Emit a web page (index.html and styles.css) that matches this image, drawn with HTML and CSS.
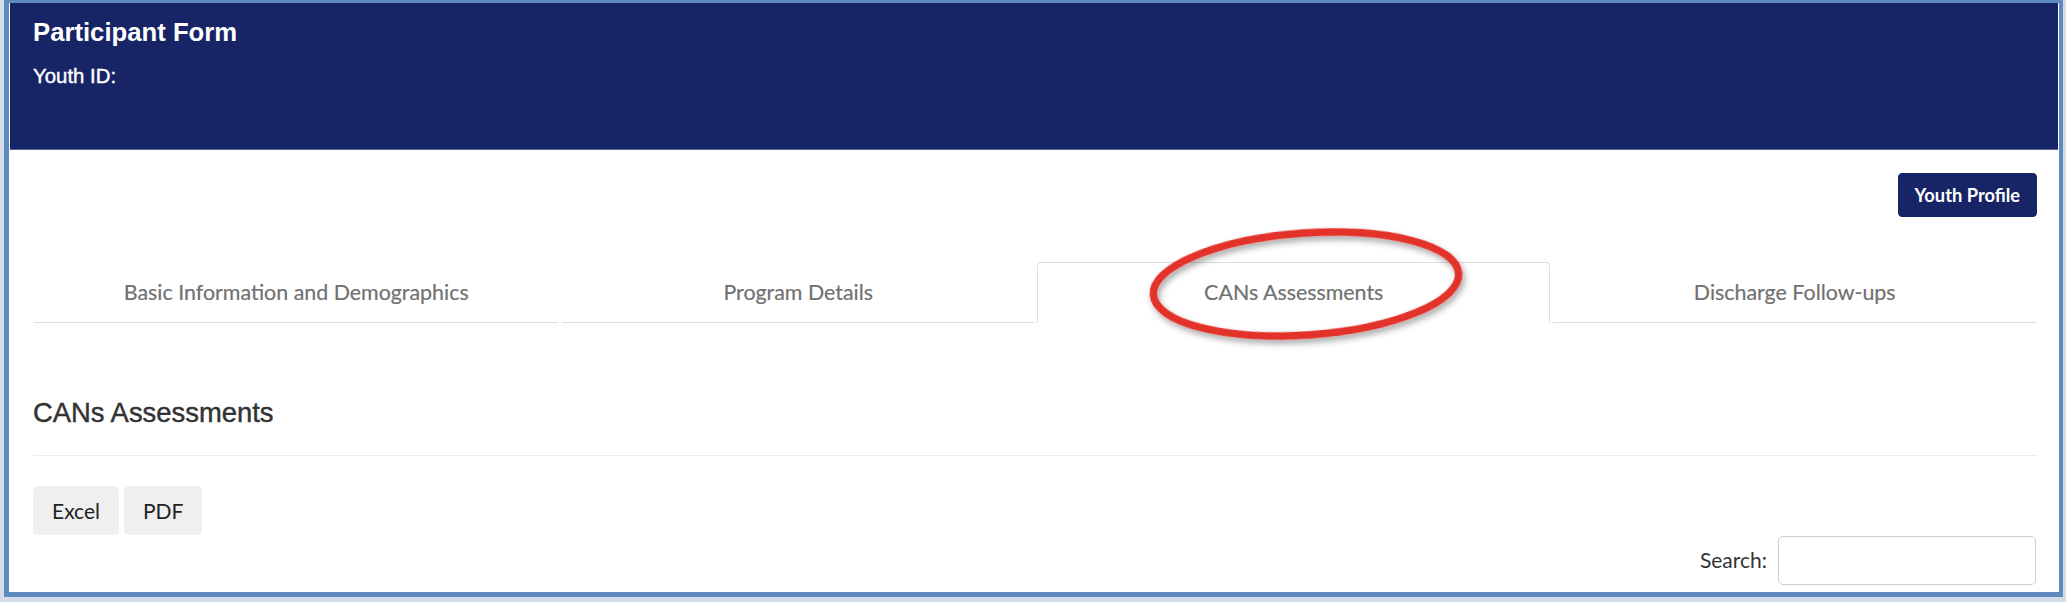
FILE: index.html
```html
<!DOCTYPE html>
<html lang="en">
<head>
<meta charset="utf-8">
<title>Participant Form</title>
<link rel="stylesheet" href="styles.css">
</head>
<body>
<div class="frame">
  <header class="hdr">
    <h1 class="hdr-title">Participant Form</h1>
    <div class="hdr-sub">Youth ID:</div>
  </header>
  <main class="content">
    <div class="toolbar">
      <button class="btn-navy" type="button">Youth Profile</button>
    </div>
    <nav class="tabs">
      <a class="tab">Basic Information and Demographics</a>
      <a class="tab">Program Details</a>
      <a class="tab active">CANs Assessments</a>
      <a class="tab">Discharge Follow-ups</a>
    </nav>
    <section class="panel">
      <h2 class="panel-title">CANs Assessments</h2>
      <div class="divider"></div>
      <div class="export">
        <button class="btn-light" type="button">Excel</button>
        <button class="btn-light" type="button">PDF</button>
      </div>
      <div class="search">
        <label class="search-label" for="q">Search:</label>
        <input class="search-input" id="q" type="text">
      </div>
    </section>
  </main>
  <svg class="annot" width="330" height="130" viewBox="0 0 330 130" aria-hidden="true">
    <defs>
      <filter id="sh" x="-10%" y="-20%" width="120%" height="150%">
        <feDropShadow dx="2" dy="4" stdDeviation="3" flood-color="#000" flood-opacity="0.35"/>
      </filter>
    </defs>
    <ellipse cx="165" cy="60" rx="153" ry="51" fill="none" stroke="#e2312a" stroke-width="7.5" transform="rotate(-4 165 60)" filter="url(#sh)"/>
  </svg>
</div>
</body>
</html>
```

FILE: styles.css
```css
html, body {
  margin: 0;
  padding: 0;
}

body {
  background: #d3dce7;
  width: 2066px;
  height: 602px;
  overflow: hidden;
}

.frame {
  position: relative;
  box-sizing: border-box;
  height: 597px;
  margin: 0 3px 0 4px;
  border-style: solid;
  border-color: #5f8abf;
  border-width: 3px 4px 5px 5px;
  padding: 0 1px;
  background: #ffffff;
  overflow: hidden;
}

.hdr {
  box-sizing: border-box;
  height: 147px;
  background: #172566;
  border-bottom: 1px solid #56638f;
  padding: 14px 23px 0 23px;
  color: #ffffff;
  font-family: "Liberation Sans", Arial, sans-serif;
}

.hdr-title {
  margin: 0;
  font-size: 25.7px;
  line-height: 30px;
  font-weight: 700;
}

.hdr-sub {
  margin-top: 17px;
  font-size: 20.4px;
  line-height: 24px;
  -webkit-text-stroke: 0.4px #ffffff;
}

.content {
  padding: 23px 21px 0 23px;
  font-family: Lato, "Open Sans", sans-serif;
}

.toolbar {
  display: flex;
  justify-content: flex-end;
}

.btn-navy {
  height: 44px;
  padding: 0 16px;
  border: 1px solid #172566;
  border-radius: 4px;
  background: #172566;
  color: #ffffff;
  font-family: Lato, "Open Sans", sans-serif;
  font-size: 18.3px;
  font-weight: 700;
}

.tabs {
  display: grid;
  grid-template-columns: 527fr 474fr 514fr 485fr;
  column-gap: 2px;
  margin-top: 45px;
}

.tab {
  display: block;
  padding: 17px 0 18px;
  border: 1px solid transparent;
  border-bottom-color: #dedede;
  border-radius: 4px 4px 0 0;
  text-align: center;
  color: #717171;
  font-size: 21.4px;
  line-height: 24px;
  white-space: nowrap;
  -webkit-text-stroke: 0.2px #717171;
}

.tab.active {
  border-color: #dedede;
  border-bottom-color: transparent;
  background: #ffffff;
}

.panel-title {
  margin: 74px 0 0;
  font-family: "Liberation Sans", Arial, sans-serif;
  font-size: 27.4px;
  line-height: 32px;
  font-weight: 400;
  color: #333333;
  -webkit-text-stroke: 0.45px #333333;
}

.divider {
  margin-top: 26px;
  height: 1px;
  background: #ececec;
}

.export {
  display: flex;
  gap: 5px;
  margin-top: 30px;
}

.btn-light {
  height: 49px;
  padding: 0 19px;
  border: 0;
  border-radius: 5px;
  background: #efefef;
  color: #222222;
  font-family: Lato, "Open Sans", sans-serif;
  font-size: 21px;
}

.search {
  display: flex;
  justify-content: flex-end;
  align-items: center;
  margin-top: 1px;
}

.search-label {
  color: #333333;
  font-size: 21px;
  margin: 0 11px 3px 0;
}

.search-input {
  box-sizing: border-box;
  width: 258px;
  height: 49px;
  margin: 0 1px 0 0;
  border: 1px solid #cfcfcf;
  border-radius: 5px;
  background: #ffffff;
}

.annot {
  position: absolute;
  left: 1132px;
  top: 221px;
  pointer-events: none;
}
```
